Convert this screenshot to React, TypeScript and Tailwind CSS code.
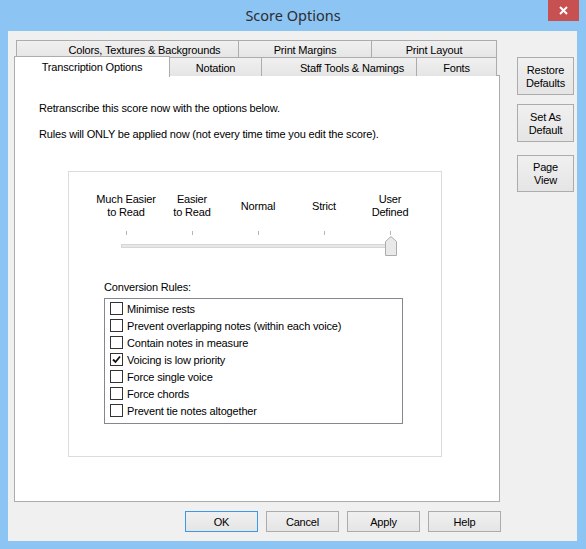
const backTabs = [
  { label: "Colors, Textures & Backgrounds", w: "w-[223px]", pad: "pl-[34px]" },
  { label: "Print Margins", w: "w-[133px]", pad: "" },
  { label: "Print Layout", w: "w-[125px]", pad: "" },
]

const frontTabs = [
  { label: "Notation", w: "w-[92px]", pad: "" },
  { label: "Staff Tools & Namings", w: "w-[155px]", pad: "pl-[26px]" },
  { label: "Fonts", w: "w-[80px]", pad: "" },
]

const levels = [
  ["Much Easier", "to Read"],
  ["Easier", "to Read"],
  ["Normal"],
  ["Strict"],
  ["User", "Defined"],
]

const rules = [
  { label: "Minimise rests", checked: false },
  { label: "Prevent overlapping notes (within each voice)", checked: false },
  { label: "Contain notes in measure", checked: false },
  { label: "Voicing is low priority", checked: true },
  { label: "Force single voice", checked: false },
  { label: "Force chords", checked: false },
  { label: "Prevent tie notes altogether", checked: false },
]

const btn =
  "border border-[#acacac] bg-linear-to-b from-[#f0f0f0] to-[#e5e5e5] text-black leading-[13px] flex flex-col items-center justify-center pt-[1px]"

function Checkbox({ checked }: { checked: boolean }) {
  return (
    <span className="w-[13px] h-[13px] border border-[#333333] bg-white flex items-center justify-center shrink-0">
      {checked && (
        <svg width="9" height="9" viewBox="0 0 9 9">
          <path d="M1 4.5 L3.5 7 L8 1.5" fill="none" stroke="#111" strokeWidth="1.8" />
        </svg>
      )}
    </span>
  )
}

export default function App() {
  return (
    <div className="w-[586px] h-[549px] bg-[#8cc4f4] flex flex-col font-['Liberation_Sans',Arial,sans-serif] text-[11px] tracking-[-0.17px] text-black">
      {/* title bar */}
      <div className="relative h-[31px] flex items-center justify-center">
        <span className="font-['Noto_Sans',sans-serif] text-[14.5px] tracking-normal text-[#2d2d2d] mt-[1px]">Score Options</span>
        <button className="absolute right-[7px] top-0 w-[31px] h-[21px] bg-[#c75050] flex items-center justify-center">
          <svg width="9" height="9" viewBox="0 0 9 9">
            <path d="M1 1 L8 8 M8 1 L1 8" stroke="white" strokeWidth="2" />
          </svg>
        </button>
      </div>

      {/* client */}
      <div className="ml-[8px] w-[569px] h-[510px] bg-[#f0f0f0] flex">
        <div className="ml-[6px] mt-[9px] w-[486px] flex flex-col">
          {/* tabs */}
          <div className="flex ml-[2px] h-[18px]">
            {backTabs.map((t, i) => (
              <div
                key={t.label}
                className={`${t.w} ${t.pad} h-[18px] pt-[1px] border-t border-r border-[#acacac] ${i === 0 ? "border-l" : ""} bg-linear-to-b from-[#f0f0f0] to-[#e5e5e5] flex items-center justify-center`}
              >
                {t.label}
              </div>
            ))}
          </div>
          <div className="relative z-10 flex items-end h-[20px] -mt-[2px] -mb-[1px]">
            <div className="w-[156px] h-[21px] -mb-[1px] border-t border-l border-r border-[#acacac] bg-white flex justify-center pt-[2px]">
              Transcription Options
            </div>
            {frontTabs.map((t) => (
              <div
                key={t.label}
                className={`${t.w} ${t.pad} h-[19px] pt-[2px] border-t border-r border-[#acacac] bg-linear-to-b from-[#f0f0f0] to-[#e5e5e5] flex items-center justify-center`}
              >
                {t.label}
              </div>
            ))}
          </div>

          {/* panel */}
          <div className="h-[427px] border border-[#acacac] bg-white flex flex-col">
            <p className="ml-[24px] mt-[26px] leading-[13px]">Retranscribe this score now with the options below.</p>
            <p className="ml-[24px] mt-[13px] leading-[13px]">
              Rules will ONLY be applied now (not every time time you edit the score).
            </p>

            <div className="ml-[53px] mt-[30px] w-[374px] h-[286px] border border-[#dcdcdc] flex flex-col">
              <div className="ml-[24px] mt-[21px] grid grid-cols-5 w-[330px] h-[26px] leading-[13px]">
                {levels.map((l) => (
                  <div key={l[0]} className="flex flex-col items-center justify-center text-center">
                    {l.map((line) => (
                      <span key={line}>{line}</span>
                    ))}
                  </div>
                ))}
              </div>
              <div className="ml-[24px] mt-[12px] grid grid-cols-5 w-[330px] h-[4px]">
                {levels.map((l) => (
                  <div key={l[0]} className="flex justify-center">
                    <span className="w-px h-[4px] bg-[#b4b4b4]" />
                  </div>
                ))}
              </div>
              <div className="relative ml-[52px] mt-[9px] w-[270px] h-[4px] border border-[#d6d6d6] bg-[#e7e7e7]">
                <svg className="absolute left-[263px] -top-[9px]" width="12" height="20" viewBox="0 0 12 20">
                  <path d="M0.5 19.5 V5.5 L6 0.5 L11.5 5.5 V19.5 Z" fill="#e9e9e9" stroke="#acacac" />
                </svg>
              </div>

              <p className="ml-[35px] mt-[33px] leading-[13px]">Conversion Rules:</p>
              <div className="ml-[35px] mt-[4px] w-[299px] h-[126px] border border-[#828790] bg-white pt-[1px] pl-[5px] flex flex-col">
                {rules.map((r) => (
                  <div key={r.label} className="h-[17px] flex items-center gap-[4px]">
                    <Checkbox checked={r.checked} />
                    <span className="pt-[1px]">{r.label}</span>
                  </div>
                ))}
              </div>
            </div>
          </div>

          {/* bottom buttons */}
          <div className="mt-[9px] -mr-[1px] flex justify-end gap-[8px]">
            <button className={`${btn} w-[73px] h-[21px] !border-[#3c98e8]`}>OK</button>
            <button className={`${btn} w-[73px] h-[21px]`}>Cancel</button>
            <button className={`${btn} w-[73px] h-[21px]`}>Apply</button>
            <button className={`${btn} w-[73px] h-[21px]`}>Help</button>
          </div>
        </div>

        {/* side buttons */}
        <div className="ml-[17px] mt-[26px] flex flex-col">
          <button className={`${btn} w-[57px] h-[38px]`}>
            <span>Restore</span>
            <span>Defaults</span>
          </button>
          <button className={`${btn} w-[57px] h-[38px] mt-[9px]`}>
            <span>Set As</span>
            <span>Default</span>
          </button>
          <button className={`${btn} w-[57px] h-[37px] mt-[13px]`}>
            <span>Page</span>
            <span>View</span>
          </button>
        </div>
      </div>
    </div>
  )
}
